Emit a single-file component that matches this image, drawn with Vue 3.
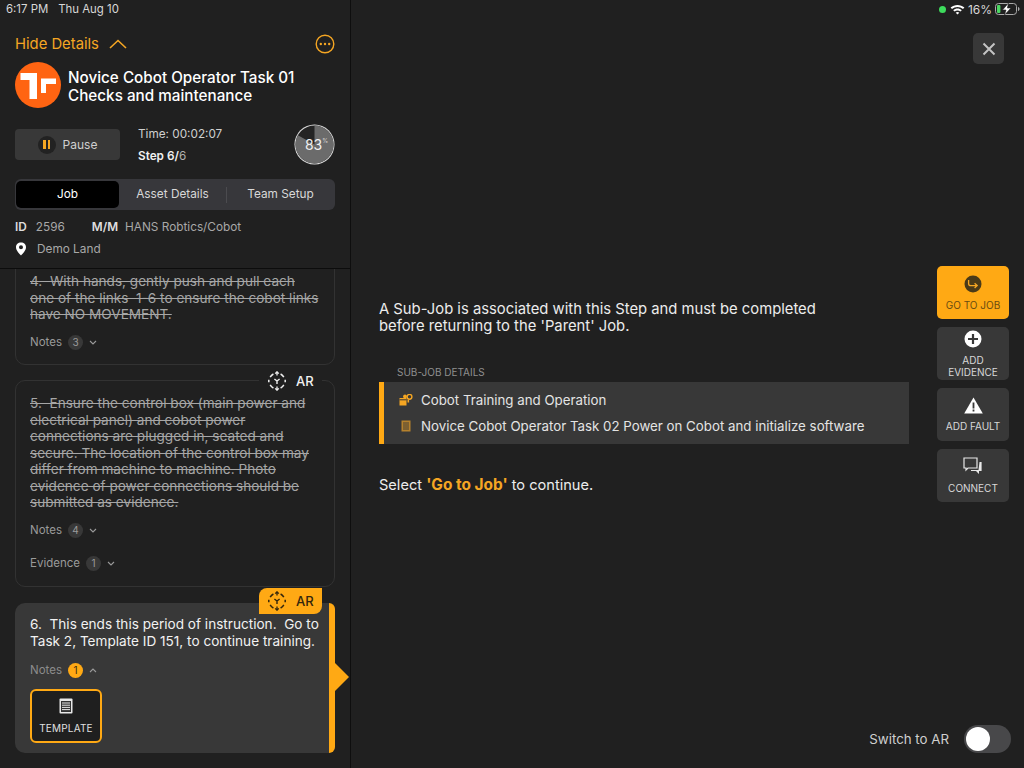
<template>
  <div class="app">
    <aside class="details">
      <div class="status-left">
        <span>6:17 PM</span>
        <span>Thu Aug 10</span>
      </div>

      <header class="head">
        <div class="hide-row">
          <span class="hide-label">Hide Details</span>
          <svg class="chev-up" width="18" height="10" viewBox="0 0 18 10">
            <path d="M1 9 L9 1.5 L17 9" fill="none" stroke="#f5a623" stroke-width="1.6" />
          </svg>
          <svg class="more" width="20" height="20" viewBox="0 0 20 20">
            <circle cx="10" cy="10" r="8.8" fill="none" stroke="#f5a623" stroke-width="1.4" />
            <circle cx="5.8" cy="10" r="1.2" fill="#f5a623" />
            <circle cx="10" cy="10" r="1.2" fill="#f5a623" />
            <circle cx="14.2" cy="10" r="1.2" fill="#f5a623" />
          </svg>
        </div>

        <div class="title-row">
          <svg class="logo" width="46" height="46" viewBox="0 0 46 46">
            <circle cx="23" cy="23" r="23" fill="#ff6412" />
            <path d="M5.5 11 H22 V37 H14.5 V18 H5.5 Z" fill="#fff" />
            <path d="M26 31 V16.5 H41 V22 H31 V31 Z" fill="#fff" />
          </svg>
          <h1 class="title">Novice Cobot Operator Task 01<br />Checks and maintenance</h1>
        </div>

        <div class="timer-row">
          <button class="pause">
            <span class="pause-icon"><i></i><i></i></span>
            Pause
          </button>
          <div class="timer">
            <div class="time">Time: 00:02:07</div>
            <div class="step"><b>Step 6/</b>6</div>
          </div>
          <div class="progress">
            <svg width="41" height="41" viewBox="0 0 41 41">
              <circle cx="20.5" cy="20.5" r="20" fill="#dcdcdc" />
              <circle cx="20.5" cy="20.5" r="19" fill="#242424" />
              <path d="M20.5 20.5 V1.5 A19 19 0 1 1 3.9 11.3 Z" fill="#6b6b6b" />
            </svg>
            <span class="pct">83<sup>%</sup></span>
          </div>
        </div>

        <div class="tabs">
          <div class="tab active">Job</div>
          <div class="tab">Asset Details</div>
          <div class="tab-sep"></div>
          <div class="tab">Team Setup</div>
        </div>

        <div class="meta">
          <b>ID</b><span class="id-val">2596</span>
          <b>M/M</b><span class="mm-val">HANS Robtics/Cobot</span>
        </div>
        <div class="loc">
          <svg width="12" height="14" viewBox="0 0 12 14">
            <path fill-rule="evenodd" d="M6 0.5 C9 0.5 11 2.6 11 5.2 C11 8.4 7.6 11.6 6 13.5 C4.4 11.6 1 8.4 1 5.2 C1 2.6 3 0.5 6 0.5 Z M6 3.2 A2 2 0 1 0 6 7.2 A2 2 0 1 0 6 3.2 Z" fill="#fff" />
          </svg>
          <span>Demo Land</span>
        </div>
      </header>

      <div class="steps">
        <section class="card card-4">
          <p class="done">{{ step4 }}</p>
          <div class="toggle first">Notes <span class="count">3</span>
            <svg class="chev" width="8" height="5" viewBox="0 0 8 5"><path d="M1 1 L4 4 L7 1" fill="none" stroke="#9a9a9a" stroke-width="1.1" /></svg>
          </div>
        </section>

        <section class="card card-5">
          <div class="ar">
            <svg width="20" height="20" viewBox="0 0 20 20"><use href="#ar-icon" /></svg>
            <span>AR</span>
          </div>
          <p class="done">{{ step5 }}</p>
          <div class="toggle first">Notes <span class="count">4</span>
            <svg class="chev" width="8" height="5" viewBox="0 0 8 5"><path d="M1 1 L4 4 L7 1" fill="none" stroke="#9a9a9a" stroke-width="1.1" /></svg>
          </div>
          <div class="toggle second">Evidence <span class="count">1</span>
            <svg class="chev" width="8" height="5" viewBox="0 0 8 5"><path d="M1 1 L4 4 L7 1" fill="none" stroke="#9a9a9a" stroke-width="1.1" /></svg>
          </div>
        </section>

        <section class="card card-6">
          <div class="ar ar-active">
            <svg width="20" height="20" viewBox="0 0 20 20"><use href="#ar-icon" /></svg>
            <span>AR</span>
          </div>
          <p class="current">{{ step6 }}</p>
          <div class="toggle open">Notes <span class="count amber">1</span>
            <svg class="chev" width="8" height="5" viewBox="0 0 8 5"><path d="M1 4 L4 1 L7 4" fill="none" stroke="#9a9a9a" stroke-width="1.1" /></svg>
          </div>
          <button class="template">
            <svg width="14" height="16" viewBox="0 0 14 16">
              <rect x="0.5" y="0.5" width="13" height="15" rx="1" fill="#e8e8e8" />
              <rect x="2" y="3" width="10" height="11" fill="#333" />
              <path d="M3 5 H11 M3 7.2 H11 M3 9.4 H11 M3 11.6 H11" stroke="#e8e8e8" stroke-width="1" />
            </svg>
            <span>TEMPLATE</span>
          </button>
          <span class="pointer"></span>
        </section>
      </div>
    </aside>

    <main class="view">
      <div class="status-right">
        <span class="dot"></span>
        <svg width="15" height="11" viewBox="0 0 15 11">
          <path d="M0.6 3.6 C4.4 0 10.6 0 14.4 3.6 L13 5.1 C10 2.3 5 2.3 2 5.1 Z" fill="#fff" />
          <path d="M3.2 6.2 C5.6 4 9.4 4 11.8 6.2 L10.4 7.6 C8.8 6.2 6.2 6.2 4.6 7.6 Z" fill="#fff" />
          <path d="M5.7 8.7 C6.7 7.9 8.3 7.9 9.3 8.7 L7.5 10.6 Z" fill="#fff" />
        </svg>
        <span class="batt-text">16%</span>
        <svg width="25" height="12" viewBox="0 0 25 12">
          <rect x="0.5" y="0.5" width="21" height="11" rx="3" fill="none" stroke="#aaa" />
          <rect x="2" y="2" width="3.4" height="8" rx="1" fill="#4cd964" />
          <path d="M13.5 0 L7.5 7 H11 L9.5 12 L16 5 H12.4 Z" fill="#fff" stroke="#222" stroke-width="0.6" />
          <path d="M23 4 C24 4.4 24.5 5 24.5 6 C24.5 7 24 7.6 23 8 Z" fill="#aaa" />
        </svg>
      </div>

      <div class="close-row">
        <button class="close">
          <svg width="14" height="14" viewBox="0 0 14 14">
            <path d="M1.5 1.5 L12.5 12.5 M12.5 1.5 L1.5 12.5" stroke="#c4c4c4" stroke-width="2" />
          </svg>
        </button>
      </div>

      <div class="middle">
        <div class="message">
          <p class="intro">A Sub-Job is associated with this Step and must be completed<br />before returning to the 'Parent' Job.</p>
          <div class="sub-label">SUB-JOB DETAILS</div>
          <div class="sub-box">
            <div class="sub-row">
              <svg class="sub-icon" width="14" height="12" viewBox="0 0 14 12">
                <path d="M0.5 4 H7.5 V11.5 H0.5 Z" fill="#f5a623" />
                <path d="M0.5 5.8 H7.5" stroke="#383838" stroke-width="1" />
                <circle cx="6" cy="2.4" r="1.9" fill="#f5a623" />
                <circle cx="10.5" cy="2.8" r="2.4" fill="none" stroke="#f5a623" stroke-width="1.4" />
                <rect x="8.5" y="5.5" width="1.6" height="3" fill="#f5a623" />
              </svg>
              Cobot Training and Operation
            </div>
            <div class="sub-row">
              <svg class="sub-icon" width="14" height="12" viewBox="0 0 14 12">
                <rect x="2.5" y="0.5" width="9" height="11" fill="#b5812d" />
                <path d="M4 3 H10 M4 5 H10 M4 7 H10 M4 9 H10" stroke="#383838" stroke-width="0.9" />
              </svg>
              Novice Cobot Operator Task 02 Power on Cobot and initialize software
            </div>
          </div>
          <p class="select">Select <b>'Go to Job'</b> to continue.</p>
        </div>

        <div class="actions">
          <button class="action primary">
            <svg width="18" height="18" viewBox="0 0 18 18">
              <circle cx="9" cy="9" r="8.5" fill="#4a3a18" />
              <path d="M4.6 5 V8.4 Q4.6 10.6 7 10.6 H13 M10.6 8.2 L13.2 10.6 L10.6 13" fill="none" stroke="#f5a623" stroke-width="1.3" />
            </svg>
            <span>GO TO JOB</span>
          </button>
          <button class="action">
            <svg width="18" height="18" viewBox="0 0 18 18">
              <circle cx="9" cy="9" r="8.5" fill="#fff" />
              <path d="M9 4 V14 M4 9 H14" stroke="#383838" stroke-width="2.2" />
            </svg>
            <span>ADD<br />EVIDENCE</span>
          </button>
          <button class="action">
            <svg width="19" height="17" viewBox="0 0 19 17">
              <path d="M9.5 0.5 L18.8 16.5 H0.2 Z" fill="#fff" />
              <path d="M9.5 5.5 V11.5 M9.5 12.6 V14.6" stroke="#383838" stroke-width="1.8" />
            </svg>
            <span>ADD FAULT</span>
          </button>
          <button class="action">
            <svg width="20" height="19" viewBox="0 0 20 19">
              <path d="M1 1 H14 V11 H5 L3 13 V11 H1 Z" fill="none" stroke="#e8e8e8" stroke-width="1.2" />
              <path d="M16.5 5 H18.6 V14 H16 V17 L13 14 H8 V13 H15.5 Z" fill="#e8e8e8" />
            </svg>
            <span>CONNECT</span>
          </button>
        </div>
      </div>

      <div class="switch-row">
        <span>Switch to AR</span>
        <span class="switch"><i></i></span>
      </div>
    </main>

    <svg width="0" height="0" class="defs">
      <symbol id="ar-icon" viewBox="0 0 20 20">
        <g fill="none" stroke="currentColor" stroke-width="1.5">
          <path d="M3.2 6.2 A8 8 0 0 1 6.4 3" />
          <path d="M13.6 3 A8 8 0 0 1 16.8 6.2" />
          <path d="M3.2 13.8 A8 8 0 0 0 6.4 17" />
          <path d="M13.6 17 A8 8 0 0 0 16.8 13.8" />
          <path d="M1.8 8.8 V11.2 M18.2 8.8 V11.2" />
          <path d="M10 1 V4.6 M8.2 2.6 L10 0.8 L11.8 2.6" stroke-width="1.3" />
          <path d="M10 15.4 V19 M8.2 17.4 L10 19.2 L11.8 17.4" stroke-width="1.3" />
          <path d="M10 10 V13 M10 10 L7.4 8 M10 10 L12.6 8" stroke-width="1.4" />
        </g>
      </symbol>
    </svg>
  </div>
</template>

<script setup>
const step4 = '4.  With hands, gently push and pull each\none of the links  1-6 to ensure the cobot links\nhave NO MOVEMENT.'
const step5 = '5.  Ensure the control box (main power and\nelectrical panel) and cobot power\nconnections are plugged in, seated and\nsecure. The location of the control box may\ndiffer from machine to machine. Photo\nevidence of power connections should be\nsubmitted as evidence.'
const step6 = '6.  This ends this period of instruction.  Go to\nTask 2, Template ID 151, to continue training.'
</script>

<style>
html,
body {
  margin: 0;
  background: #202020;
}
</style>

<style scoped>
.app {
  display: flex;
  width: 1024px;
  height: 768px;
  overflow: hidden;
  background: #202020;
  color: #e8e8e8;
  font-family: Inter, "Liberation Sans", sans-serif;
}

button {
  font-family: inherit;
  border: 0;
  padding: 0;
}

p,
h1 {
  margin: 0;
}

.defs {
  position: absolute;
}

.details {
  width: 351px;
  height: 768px;
  box-sizing: border-box;
  flex: none;
  display: flex;
  flex-direction: column;
  border-right: 1px solid #0e0e0e;
}

.status-left {
  display: flex;
  gap: 10px;
  padding: 2px 0 0 6px;
  height: 16px;
  font-size: 11.4px;
  line-height: 14px;
  color: #d8d8d8;
}

.head {
  padding: 0 15px;
}

.hide-row {
  display: flex;
  align-items: center;
  height: 20px;
  margin-top: 16px;
}

.hide-label {
  font-size: 14.8px;
  color: #f5a623;
}

.chev-up {
  margin-left: 10px;
}

.more {
  margin-left: auto;
}

.title-row {
  display: flex;
  align-items: center;
  gap: 7px;
  margin-top: 8px;
}

.title {
  padding-top: 4px;
  font-size: 15.25px;
  line-height: 18.5px;
  font-weight: 500;
  color: #fff;
}

.timer-row {
  display: flex;
  align-items: center;
  margin-top: 16px;
}

.pause {
  display: flex;
  align-items: center;
  justify-content: center;
  gap: 7px;
  width: 105px;
  height: 31px;
  border-radius: 4px;
  background: #383838;
  color: #cfcfcf;
  font-size: 12px;
}

.pause-icon {
  display: flex;
  align-items: center;
  justify-content: center;
  gap: 2px;
  width: 18px;
  height: 18px;
  border-radius: 50%;
  background: #222;
}

.pause-icon i {
  width: 2.4px;
  height: 9px;
  background: #f5a623;
}

.timer {
  margin-left: 18px;
  font-size: 11.75px;
  color: #cfcfcf;
}

.time {
  line-height: 14px;
}

.step {
  margin-top: 8px;
  line-height: 14px;
  color: #b0b0b0;
}

.step b {
  color: #f0f0f0;
  font-weight: 600;
}

.progress {
  position: relative;
  width: 41px;
  height: 41px;
  margin-left: auto;
}

.pct {
  position: absolute;
  inset: 0;
  display: flex;
  align-items: center;
  justify-content: center;
  padding-left: 4px;
  font-size: 14px;
  color: #f0f0f0;
}

.pct sup {
  font-size: 6px;
  line-height: 1;
  margin-bottom: 8px;
  color: #d0d0d0;
}

.tabs {
  display: flex;
  align-items: center;
  height: 29px;
  margin: 14px 0 0;
  padding: 1px;
  border-radius: 6px;
  background: #37373b;
  font-size: 11.8px;
  color: #d8d8d8;
}

.tab {
  flex: 1;
  height: 27px;
  line-height: 27px;
  text-align: center;
}

.tab.active {
  flex: none;
  width: 103px;
  border-radius: 5px;
  background: #000;
  color: #fff;
}

.tab-sep {
  width: 1px;
  height: 16px;
  background: #4b4b4f;
}

.meta {
  display: flex;
  align-items: center;
  margin-top: 9px;
  height: 16px;
  font-size: 11.8px;
  color: #a8a8a8;
}

.meta b {
  color: #dedede;
  font-weight: 600;
}

.id-val {
  margin: 0 27px 0 9px;
}

.mm-val {
  margin-left: 7px;
}

.loc {
  display: flex;
  align-items: center;
  gap: 10px;
  margin-top: 6px;
  height: 16px;
  font-size: 11.8px;
  color: #a8a8a8;
}

.steps {
  flex: 1;
  min-height: 0;
  margin-top: 11px;
  padding: 0 15px;
  border-top: 1px solid #0c0c0c;
  overflow: hidden;
}

.card {
  position: relative;
  box-sizing: border-box;
  border: 1px solid #323232;
  border-radius: 10px;
  padding: 0 14px;
  font-size: 13.6px;
  line-height: 16.5px;
}

.card p {
  white-space: pre-wrap;
}

.done {
  color: #a6a6a6;
  text-decoration: line-through;
}

.card-4 {
  height: 110px;
  margin-top: -14px;
  padding-top: 17px;
}

.card-5 {
  height: 207px;
  margin-top: 15px;
  padding-top: 14px;
}

.card-6 {
  height: 150px;
  margin-top: 16px;
  padding: 13px 0 0 15px;
  border: 0;
  border-right: 6px solid #ffa914;
  border-radius: 10px 6px 6px 10px;
  background: #383838;
}

.current {
  color: #f2f2f2;
}

.toggle {
  display: flex;
  align-items: center;
  height: 15px;
  font-size: 11.5px;
  color: #9a9a9a;
}

.toggle.first {
  margin-top: 12px;
}

.toggle.second {
  margin-top: 18px;
}

.toggle.open {
  margin-top: 14px;
  color: #8c8c8c;
}

.count {
  display: inline-flex;
  align-items: center;
  justify-content: center;
  width: 15px;
  height: 15px;
  margin: 0 6px;
  border-radius: 50%;
  background: #383838;
  font-size: 10px;
  color: #9a9a9a;
}

.count.amber {
  background: #ffa914;
  color: #3a2c10;
}

.ar {
  position: absolute;
  top: -13px;
  right: 12px;
  display: flex;
  align-items: center;
  gap: 9px;
  box-sizing: border-box;
  width: 63px;
  height: 26px;
  padding-left: 8px;
  background: #202020;
  color: #f0f0f0;
  font-size: 13px;
  font-weight: 500;
}

.ar-active {
  top: -15px;
  right: 7px;
  background: #ffa914;
  color: #33260d;
  border-radius: 8px 0 8px 0;
}

.template {
  display: flex;
  flex-direction: column;
  align-items: center;
  justify-content: center;
  gap: 8px;
  box-sizing: border-box;
  width: 72px;
  height: 54px;
  margin-top: 11px;
  border: 2px solid #ffa914;
  border-radius: 6px;
  background: #1f1f1f;
  color: #e0e0e0;
  font-size: 10px;
  line-height: 12px;
  letter-spacing: 0.2px;
}

.pointer {
  position: absolute;
  right: -20px;
  top: 60px;
  width: 0;
  height: 0;
  border-top: 14px solid transparent;
  border-bottom: 14px solid transparent;
  border-left: 14px solid #ffa914;
}

.view {
  flex: 1;
  min-width: 0;
  display: flex;
  flex-direction: column;
}

.status-right {
  display: flex;
  align-items: center;
  justify-content: flex-end;
  gap: 3px;
  height: 18px;
  padding-right: 4px;
  font-size: 12px;
  color: #d8d8d8;
}

.dot {
  width: 7px;
  height: 7px;
  margin-right: 1px;
  border-radius: 50%;
  background: #3ddb5c;
}

.close-row {
  display: flex;
  justify-content: flex-end;
  padding: 15px 20px 0 0;
}

.close {
  display: flex;
  align-items: center;
  justify-content: center;
  width: 31px;
  height: 31px;
  border-radius: 5px;
  background: #383838;
}

.middle {
  display: flex;
  justify-content: space-between;
  margin-top: 202px;
  padding: 0 15px 0 28px;
}

.message {
  width: 530px;
  padding-top: 35px;
}

.intro {
  font-size: 14.8px;
  line-height: 17px;
  color: #ececec;
}

.sub-label {
  margin: 31px 0 0 18px;
  font-size: 10px;
  line-height: 12px;
  color: #8f8f8f;
}

.sub-box {
  margin-top: 4px;
  height: 62px;
  box-sizing: border-box;
  border-left: 5px solid #ffa914;
  background: #383838;
  display: flex;
  flex-direction: column;
  justify-content: space-around;
  padding: 5px 0;
}

.sub-row {
  display: flex;
  align-items: center;
  gap: 8px;
  padding-left: 15px;
  font-size: 13.3px;
  color: #e4e4e4;
}

.select {
  margin-top: 32px;
  font-size: 14.6px;
  line-height: 17px;
  color: #ececec;
}

.select b {
  color: #f5a623;
  font-size: 15.4px;
  font-weight: 700;
}

.actions {
  display: flex;
  flex-direction: column;
  gap: 8px;
}

.action {
  display: flex;
  flex-direction: column;
  align-items: center;
  justify-content: center;
  gap: 6px;
  width: 72px;
  height: 53px;
  border-radius: 5px;
  background: #383838;
  color: #d8d8d8;
  font-size: 10px;
  line-height: 12px;
}

.action.primary {
  background: #ffa914;
  color: #6a4c12;
}

.switch-row {
  display: flex;
  align-items: center;
  justify-content: flex-end;
  gap: 15px;
  margin-top: auto;
  padding: 0 13px 15px 0;
  font-size: 13.3px;
  color: #cfcfcf;
}

.switch {
  display: flex;
  align-items: center;
  box-sizing: border-box;
  width: 47px;
  height: 28px;
  padding: 2px;
  border-radius: 14px;
  background: #48484a;
}

.switch i {
  width: 24px;
  height: 24px;
  border-radius: 50%;
  background: #fff;
}
</style>
